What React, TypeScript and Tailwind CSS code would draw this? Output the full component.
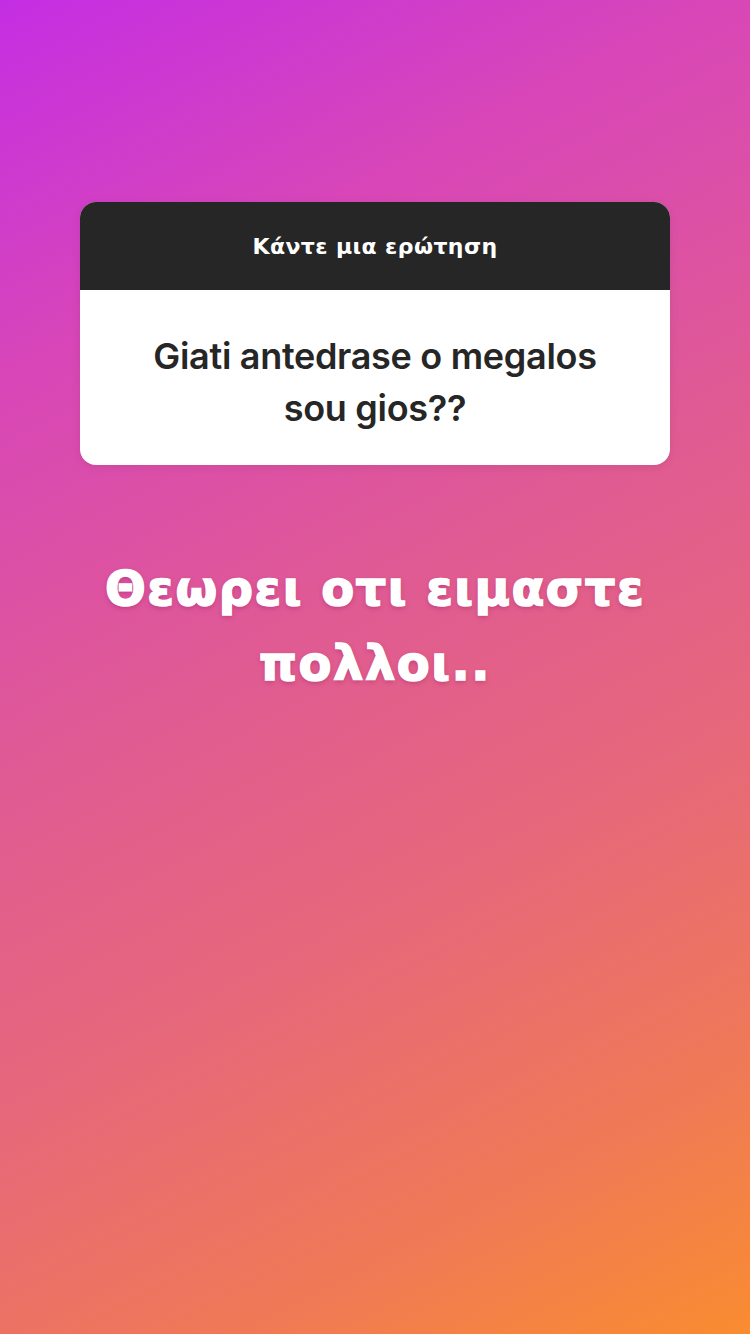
export default function App() {
  return (
    <div className="w-[750px] h-[1334px] overflow-hidden bg-[linear-gradient(152deg,#c42ee3_0%,#d846b8_22%,#e05a94_45%,#e6687a_65%,#f07a55_85%,#fa8c30_100%)] flex flex-col items-center">
      <div className="mt-[202px] w-[590px] rounded-[16px] overflow-hidden bg-white shadow-[0_2px_10px_rgba(0,0,0,0.08)]">
        <div className="h-[88px] bg-[#262626] flex items-center justify-center">
          <span className="text-white text-[22px] font-bold tracking-[0.4px] font-['DejaVu_Sans','Noto_Sans',sans-serif]">
            Κάντε μια ερώτηση
          </span>
        </div>
        <div className="h-[175px] flex items-center justify-center px-6 pt-2">
          <p className="text-center text-[#262626] text-[36px] leading-[52px] font-semibold tracking-[-0.3px] font-['Inter','Roboto',sans-serif]">
            Giati antedrase o megalos
            <br />
            sou gios??
          </p>
        </div>
      </div>
      <p className="mt-[86px] text-center text-white text-[48px] leading-[75px] font-bold tracking-[1.5px] [-webkit-text-stroke:1.5px_white] font-['DejaVu_Sans','Noto_Sans',sans-serif] [text-shadow:0_2px_5px_rgba(140,20,90,0.4)]">
        Θεωρει οτι ειμαστε
        <br />
        πολλοι..
      </p>
    </div>
  );
}
